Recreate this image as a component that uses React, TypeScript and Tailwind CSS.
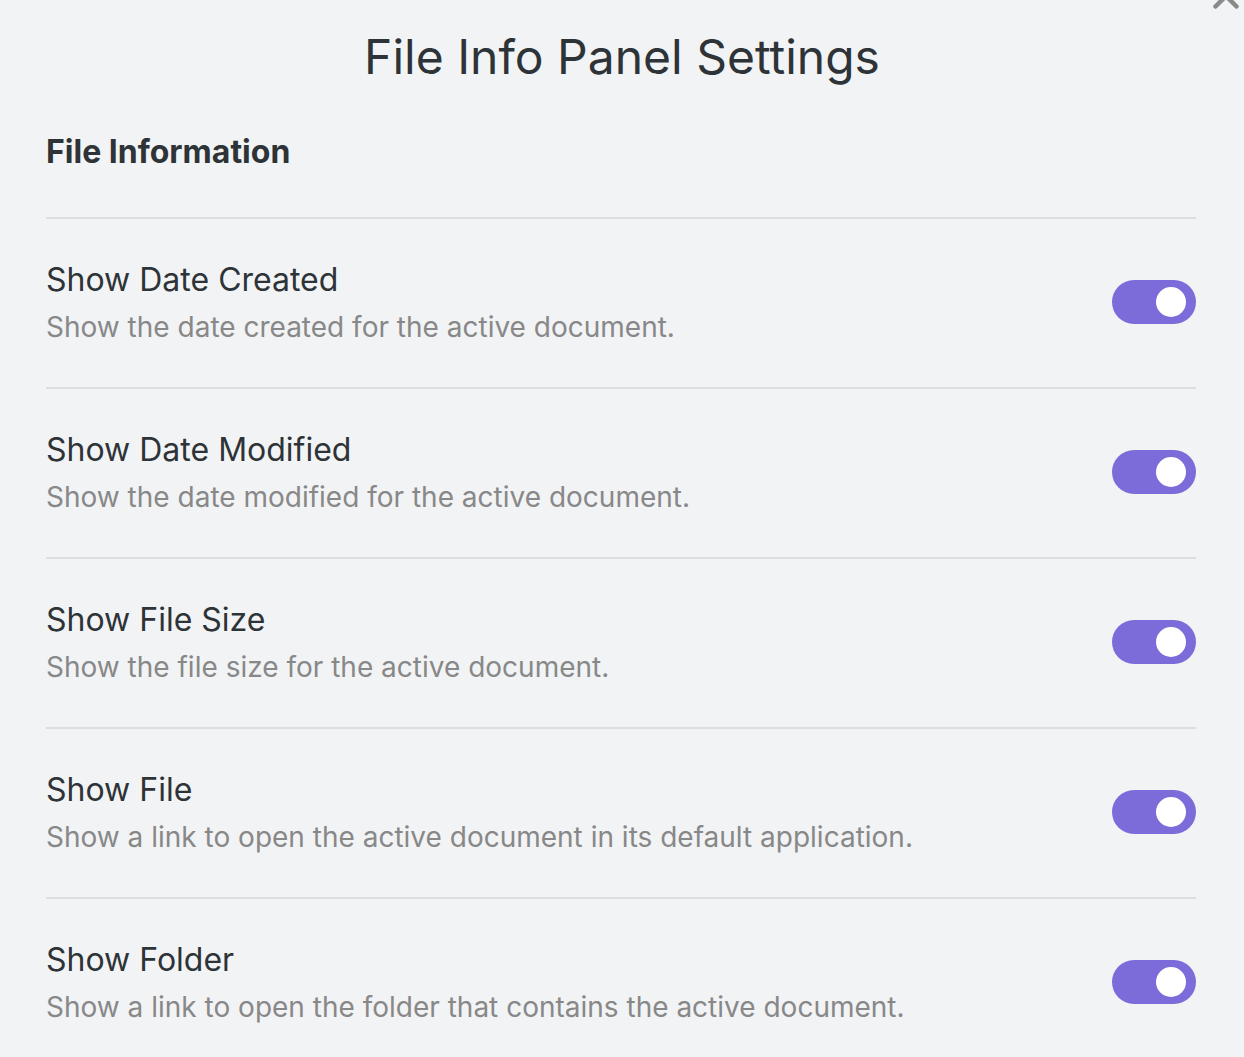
const items = [
  { name: "Show Date Created", desc: "Show the date created for the active document." },
  { name: "Show Date Modified", desc: "Show the date modified for the active document." },
  { name: "Show File Size", desc: "Show the file size for the active document." },
  { name: "Show File", desc: "Show a link to open the active document in its default application." },
  { name: "Show Folder", desc: "Show a link to open the folder that contains the active document." },
];

function Toggle() {
  return (
    <div className="flex h-[44px] w-[84px] shrink-0 items-center justify-end rounded-full bg-[#7b6cd9] pr-[10px]">
      <div className="h-[30px] w-[30px] rounded-full bg-white" />
    </div>
  );
}

export default function App() {
  return (
    <div className="relative h-[1057px] w-full overflow-hidden bg-[#f2f3f5] font-['Inter',sans-serif] text-[#2e3338]">
      <button className="absolute right-[0px] top-[-22px] text-[#8a8a8a]">
        <svg width="36" height="36" viewBox="0 0 24 24" fill="none" stroke="currentColor" strokeWidth="3" strokeLinecap="round">
          <path d="M5 5l14 14M19 5L5 19" />
        </svg>
      </button>
      <h1 className="pt-[28px] text-center text-[48px] leading-[58px] font-normal">File Info Panel Settings</h1>
      <div className="pl-[46px] pr-[48px]">
        <h2 className="mt-[46px] pb-[45px] text-[32px] leading-[40px] font-bold">File Information</h2>
        {items.map((it) => (
          <div key={it.name} className="flex items-center justify-between border-t-2 border-[#dddddd] pt-[39px] pb-[42px]">
            <div className="flex flex-col">
              <div className="text-[32px] leading-[44px]">{it.name}</div>
              <div className="mt-[7px] text-[28px] leading-[36px] text-[#888888]">{it.desc}</div>
            </div>
            <Toggle />
          </div>
        ))}
      </div>
    </div>
  );
}
